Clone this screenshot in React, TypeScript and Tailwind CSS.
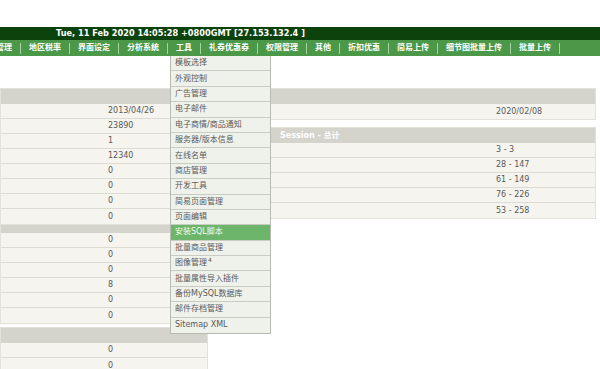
import React from 'react';

const menuItems = [
  '管理',
  '地区税率',
  '界面设定',
  '分析系统',
  '工具',
  '礼券优惠券',
  '权限管理',
  '其他',
  '折扣优惠',
  '简易上传',
  '细节图批量上传',
  '批量上传',
];

const toolItems = [
  '模板选择',
  '外观控制',
  '广告管理',
  '电子邮件',
  '电子商情/商品通知',
  '服务器/版本信息',
  '在线名单',
  '商店管理',
  '开发工具',
  '简易页面管理',
  '页面编辑',
  '安装SQL脚本',
  '批量商品管理',
  '图像管理',
  '批量属性导入插件',
  '备份MySQL数据库',
  '邮件存档管理',
  'Sitemap XML',
];

function Row({ value, labelWidth }: { value: string; labelWidth: string }) {
  return (
    <div className="flex h-[15px] items-center border-b border-[#dddcd4] bg-[#f5f4ee] last:border-b-0">
      <div className={labelWidth} />
      <div className="px-[3px] text-[#5a5a5a]">{value}</div>
    </div>
  );
}

function Box({
  title,
  rows,
  labelWidth,
  headerClass = 'h-[15px]',
  className = '',
}: {
  title?: string;
  rows: string[];
  labelWidth: string;
  headerClass?: string;
  className?: string;
}) {
  return (
    <div className={`border border-[#e2e1da] ${className}`}>
      <div className={`${headerClass} flex items-center bg-[#d4d4cd] pl-[11px] font-bold text-white`}>{title}</div>
      {rows.map((v, i) => (
        <Row key={i} value={v} labelWidth={labelWidth} />
      ))}
    </div>
  );
}

export default function App() {
  return (
    <div className="relative h-[369px] w-[600px] overflow-hidden bg-white font-['DejaVu_Sans','Noto_Sans_CJK_SC',sans-serif] text-[8px] leading-none">
      <div className="h-[27px]" />

      {/* date / ip bar */}
      <div className="flex h-[13px] items-center bg-[#0c420c] pl-[56px] text-[8.2px] font-bold text-white">
        Tue, 11 Feb 2020 14:05:28 +0800GMT [27.153.132.4 ]
      </div>

      {/* main menu */}
      <nav className="relative flex h-[16px] items-center bg-[#4c9849] font-bold text-white">
        <div className="-ml-[4px] flex items-center">
          {menuItems.map((item, i) => (
            <div key={item} className="flex items-center">
              <span className={i === 0 ? 'pr-[8px]' : 'px-[8px]'}>{item}</span>
              <span className="h-[11px] w-px bg-[#a5d3a0]" />
            </div>
          ))}
        </div>

        {/* 工具 dropdown */}
        <div className="absolute left-[170px] top-full z-10 w-[101px] border-x border-b border-[#b8bbb1] bg-[#eff1eb] font-normal">
          {toolItems.map((t) => (
            <div
              key={t}
              className={`flex h-[15.4px] items-center border-b border-[#c9ccc2] pl-[4px] last:border-b-0 ${
                t === '安装SQL脚本' ? 'bg-[#6db56a] text-[#f4fbf2]' : 'text-[#5a5a5a]'
              }`}
            >
              {t}
              {t === '图像管理' && <sup className="ml-[1px] text-[6px] leading-none">4</sup>}
            </div>
          ))}
        </div>
      </nav>

      {/* content */}
      <main className="mt-[32px] flex">
        <div className="flex w-[268px] shrink-0 flex-col">
          <Box
            rows={['2013/04/26', '23890', '1', '12340', '0', '0', '0', '0']}
            labelWidth="w-[104px]"
          />
          <Box
            rows={['0', '0', '0', '8', '0', '0']}
            labelWidth="w-[104px]"
            headerClass="h-[8px]"
            className="-mt-px"
          />
          <Box rows={['0', '0']} labelWidth="w-[104px]" className="mt-[3px] w-[208px]" />
        </div>

        <div className="mr-[4px] flex flex-1 flex-col">
          <Box rows={['2020/02/08']} labelWidth="w-[224px]" />
          <Box
            title="Session - 总计"
            rows={['3 - 3', '28 - 147', '61 - 149', '76 - 226', '53 - 258']}
            labelWidth="w-[224px]"
            className="mt-[7px]"
          />
        </div>
      </main>
    </div>
  );
}
